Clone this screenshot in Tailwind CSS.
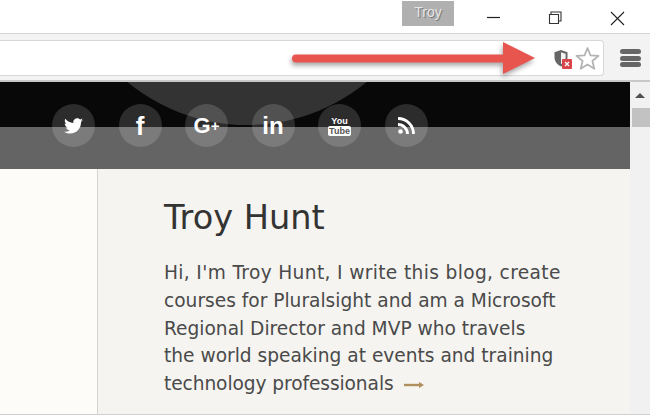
<!DOCTYPE html>
<html lang="en">
<head>
    <meta charset="UTF-8">
    <title>Troy Hunt</title>
    <script src="https://cdn.jsdelivr.net/npm/@tailwindcss/browser@4"></script>
</head>
<body class="relative w-[650px] h-[415px] overflow-hidden bg-white font-['DejaVu_Sans',sans-serif]">

    <!-- title bar -->
    <div class="h-[33px] flex items-start bg-white">
        <div class="ml-[402px] mt-[1px] w-[52px] h-[25px] bg-[#b0b0b0] text-[#e6e6e6] text-[14px] font-['Liberation_Sans',sans-serif] text-center leading-[23px] [text-shadow:1px_1px_0_#777]">Troy</div>
        <svg class="ml-[33px] mt-[11px]" width="14" height="12" viewBox="0 0 14 12"><path d="M0 6.5h13" stroke="#222" stroke-width="1.2"/></svg>
        <svg class="ml-[47px] mt-[11px]" width="14" height="14" viewBox="0 0 14 14" fill="none" stroke="#333" stroke-width="1.1"><path d="M3 3V1h10v9h-2"/><path d="M1.5 3.5h9v9h-9z"/></svg>
        <svg class="ml-[48px] mt-[11px]" width="15" height="15" viewBox="0 0 15 15" fill="none" stroke="#222" stroke-width="1.1"><path d="M1 1l13 13M14 1L1 14"/></svg>
    </div>

    <!-- toolbar -->
    <div class="h-[49px] bg-[#f3f3f3] border-t border-[#d4d4d4] border-b-2 border-b-[#c8c8c8] flex items-start">
        <div class="w-[604px] h-[36px] mt-[6px] bg-white border border-[#d8d8d8] border-l-0 rounded-r-[4px] flex items-center">
            <svg class="ml-[553px]" width="19" height="21" viewBox="0 0 19 21">
                <path d="M8 2l6.500 2.200v5c0 4.500-3 7.600-6.500 9.300-3.500-1.700-6.500-4.800-6.500-9.300v-5z" fill="#666"/>
                <path d="M8 4.200l4.600 1.500v3.500c0 3.300-2 5.600-4.600 7z" fill="#f4f4f4"/>
                <rect x="9" y="11" width="10" height="10" rx="1" fill="#d9434a"/>
                <path d="M12 14l4 4M16 14l-4 4" stroke="#fff" stroke-width="1.300"/>
            </svg>
            <svg class="ml-[3px]" width="25" height="25" viewBox="0 0 25 25"><path d="M12.500 2l3 7.300 8 .6-6.100 5.100 1.900 7.800-6.800-4.200-6.800 4.200 1.900-7.800L1.500 9.900l8-.6z" fill="#fff" stroke="#b4b4b4" stroke-width="1.800" stroke-linejoin="round"/></svg>
        </div>
        <div class="ml-[16px] mt-[15px] w-[21px] flex flex-col gap-[1.500px]">
            <div class="h-[5px] rounded-full bg-[#666666]"></div>
            <div class="h-[5px] rounded-full bg-[#666666]"></div>
            <div class="h-[5px] rounded-full bg-[#666666]"></div>
        </div>
    </div>

    <div class="flex h-[333px]">
        <div class="w-[630px] flex flex-col">
            <!-- header with social links -->
            <div class="relative h-[87px] shrink-0 overflow-hidden">
                <div class="h-[45px] bg-[#080808] overflow-hidden relative">
                    <div class="absolute left-[59px] top-[-333px] w-[376px] h-[376px] rounded-full bg-[#333333]"></div>
                </div>
                <div class="h-[42px] bg-[#646464]"></div>
                <div class="absolute left-[52px] top-[22px] flex gap-[23.500px] text-white">
                    <div class="w-[43px] h-[43px] rounded-full bg-white/15 flex items-center justify-center">
                        <svg width="19" height="16" viewBox="0 0 24 20" fill="#fff"><path d="M24 2.400c-.9.400-1.800.7-2.800.8 1-.6 1.800-1.600 2.200-2.700-1 .6-2 1-3.100 1.200C19.300.7 18 .1 16.600.1c-2.700 0-4.900 2.200-4.900 4.900 0 .4 0 .8.100 1.100C7.700 5.900 4.100 4 1.700.9c-.4.700-.7 1.600-.7 2.500 0 1.700.9 3.200 2.200 4.100-.8 0-1.600-.2-2.200-.6v.1c0 2.400 1.700 4.400 3.900 4.800-.4.100-.8.200-1.300.2-.3 0-.6 0-.9-.1.600 2 2.400 3.400 4.600 3.400-1.700 1.300-3.800 2.100-6.100 2.100-.4 0-.8 0-1.200-.1 2.200 1.400 4.800 2.200 7.500 2.200 9.100 0 14-7.500 14-14v-.6c1-.7 1.800-1.600 2.500-2.500z"/></svg>
                    </div>
                    <div class="w-[43px] h-[43px] rounded-full bg-white/15 flex items-center justify-center font-['Liberation_Sans',sans-serif] font-bold text-[26px] leading-none">f</div>
                    <div class="w-[43px] h-[43px] rounded-full bg-white/15 flex items-center justify-center font-['Liberation_Sans',sans-serif] font-bold text-[22px] leading-none">G<span class="text-[15px]">+</span></div>
                    <div class="w-[43px] h-[43px] rounded-full bg-white/15 flex items-center justify-center font-['Liberation_Sans',sans-serif] font-bold text-[24px] leading-none">in</div>
                    <div class="w-[43px] h-[43px] rounded-full bg-white/15 flex flex-col items-center justify-center font-['Liberation_Sans',sans-serif] font-bold leading-none">
                        <span class="text-[9px] leading-[10px]">You</span>
                        <span class="text-[9px] leading-[10px] bg-white text-[#555] rounded-[2px] px-[1px]">Tube</span>
                    </div>
                    <div class="w-[43px] h-[43px] rounded-full bg-white/15 flex items-center justify-center">
                        <svg width="17" height="17" viewBox="0 0 17 17" fill="none" stroke="#fff" stroke-width="2.800"><circle cx="2.500" cy="14.500" r="2.300" fill="#fff" stroke="none"/><path d="M0 7.500a9.500 9.500 0 0 1 9.500 9.500"/><path d="M0 1.500a15.500 15.500 0 0 1 15.500 15.500"/></svg>
                    </div>
                </div>
            </div>

            <!-- page body -->
            <div class="flex flex-1">
                <div class="w-[98px] bg-[#fdfcf8] border-r border-[#d4d4d0]"></div>
                <div class="flex-1 bg-[#f5f4f0] pl-[66px] pt-[28px]">
                    <h1 class="text-[33.600px] leading-[42px] text-[#333333]">Troy Hunt</h1>
                    <p class="mt-[20px] text-[18.600px] leading-[27.800px] text-[#4a4a4a] whitespace-nowrap">
                        <span class="tracking-[0.350px]">Hi, I'm Troy Hunt, I write this blog, create</span><br>
                        courses for Pluralsight and am a Microsoft<br>
                        Regional Director and MVP who travels<br>
                        the world speaking at events and training<br>
                        <span class="tracking-[-0.080px]">technology professionals</span>
                        <svg class="inline ml-[4px]" width="20" height="10" viewBox="0 0 20 10"><path d="M0 5h17" stroke="#b08d5c" stroke-width="2.400"/><path d="M15 2l5 3-5 3z" fill="#b08d5c"/></svg>
                    </p>
                </div>
            </div>
        </div>

        <!-- scrollbar -->
        <div class="w-[20px] bg-[#f1f1f1] flex flex-col items-end">
            <div class="mt-[11px] mr-[5px] w-0 h-0 border-x-[5px] border-x-transparent border-b-[5px] border-b-[#505050]"></div>
            <div class="mt-[10px] w-[18px] h-[19px] bg-[#c2c2c2]"></div>
        </div>
    </div>

    <!-- bottom edge of the window -->
    <div class="absolute left-0 bottom-0 w-full h-[1px] bg-[#d0d0d0]"></div>

    <!-- red arrow annotation -->
    <svg class="absolute left-[285px] top-[35px]" width="265" height="50" viewBox="0 0 265 50">
        <path d="M11 19.500h207V7l32 16-32 16V27.500H11a4 4 0 0 1 0-8z" fill="#000" opacity=".35" transform="translate(-1 3)" style="filter:blur(2.500px)"/>
        <path d="M11 19.500h207V7l32 16-32 16V27.500H11a4 4 0 0 1 0-8z" fill="#e8554f"/>
    </svg>
</body>
</html>
